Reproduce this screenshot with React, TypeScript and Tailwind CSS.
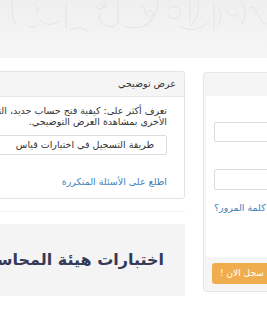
import React from "react";

function HeaderPattern() {
  return (
    <svg className="absolute inset-0" width="267" height="58" viewBox="0 0 267 58" fill="none">
      <g stroke="#e0e0e0" strokeWidth="0.8" fill="none" strokeLinecap="round">
        <path d="M12 2 C14 10 10 18 16 24" />
        <path d="M34 4 c4 2 6 6 2 9" />
        <path d="M40 20 c6 6 14 6 20 0" />
        <path d="M66 4 v24" />
        <path d="M70 30 c8 -4 14 -2 18 2" />
        <path d="M96 6 c2 4 6 4 8 0" />
        <path d="M100 14 c-2 6 2 12 8 12" />
        <path d="M118 2 v18 c0 6 -6 8 -10 6" />
        <path d="M124 26 c10 4 22 2 28 -6" />
        <path d="M140 6 c4 0 6 4 4 8" />
        <path d="M158 2 c0 8 -4 18 -14 24" />
        <path d="M170 8 c6 -4 12 0 10 6 c-2 6 -10 6 -12 0" />
        <path d="M180 26 c8 6 24 4 30 -6" />
        <path d="M190 2 v20" />
        <path d="M198 2 c2 10 -2 20 -8 24" />
        <path d="M214 4 v26" />
        <path d="M218 6 c4 6 4 14 0 20" />
        <path d="M226 10 c2 6 8 8 12 4" />
        <path d="M242 2 c4 6 4 14 0 22" />
        <path d="M250 8 c4 -2 8 2 6 6" />
        <path d="M258 14 c2 6 6 10 8 10" />
        <path d="M146 14 l4 -4 l4 4 l-4 4 z" />
        <path d="M104 2 l3 3 l-3 3 l-3 -3 z" />
        <path d="M28 26 c4 2 8 2 10 -2" />
      </g>
    </svg>
  );
}

export default function App() {
  const font = { fontFamily: '"DejaVu Sans", sans-serif' };
  return (
    <div
      className="relative w-[267px] h-[322px] overflow-hidden bg-white text-[#333]"
      style={font}
    >
      {/* Top band */}
      <div className="relative h-[58px] bg-gradient-to-b from-[#efefef] to-[#f6f6f6] border-b border-[#f0f0f0]">
        <HeaderPattern />
      </div>

      {/* Content row (RTL, extends beyond viewport) */}
      <div dir="rtl" className="flex items-start gap-[18px] mt-[13px] mr-[-136px]">
        {/* Right panel (login) */}
        <div className="w-[200px] shrink-0 mt-[1px] border border-[#e6e6e6] rounded-[3px] bg-[#f5f5f5]">
          <div className="h-[23px]" />
          <div className="mx-[2px] bg-white h-[161px] pt-[26px] pl-[8px] pr-[10px]">
            <div className="h-[20px] border border-[#dcdcdc] rounded-[2px] bg-white" />
            <div className="h-[21px] mt-[27px] border border-[#dcdcdc] rounded-[2px] bg-white" />
            <div className="flex justify-end mt-[11px]">
              <a className="text-[9.5px] leading-[14px] text-[#3f7fb8] whitespace-nowrap">
                هل نسيت كلمة المرور؟
              </a>
            </div>
          </div>
          <div className="h-[34px] pt-[6px] pl-[8px] flex justify-end">
            <button className="h-[21px] pl-[8px] pr-[10px] rounded-[3px] bg-[#f0ad4e] text-white text-[9px] whitespace-nowrap">
              سجل الان !
            </button>
          </div>
        </div>

        {/* Left column */}
        <div className="w-[420px] shrink-0">
          <div className="border border-[#e4e4e4] rounded-[3px] bg-white">
            <div className="h-[25px] bg-[#f5f5f5] border-b border-[#e8e8e8] rounded-t-[3px] pr-[8px] flex items-center text-[9.5px]">
              عرض توضيحي
            </div>
            <div className="pr-[17px] pt-[8px] pb-[9px]">
              <p className="text-[9.5px] leading-[11px] whitespace-nowrap">
                تعرف أكثر على: كيفية فتح حساب جديد، التسجيل في الاختبارات، وغيرها من الخدمات
                <br />
                الأخرى بمشاهدة العرض التوضيحي.
              </p>
              <div className="mt-[8px] h-[20px] border border-[#dddddd] rounded-[2px] flex items-center pr-[12px] text-[9.5px]">
                طريقة التسجيل في اختبارات قياس
              </div>
              <div className="mt-[20px] text-[9.5px] leading-[14px] text-[#3f7fb8]">
                اطلع على الأسئلة المتكررة
              </div>
            </div>
          </div>
          <div className="h-[13px] border-b border-[#f2f2f2]" />
          <div className="mt-[12px] h-[72px] bg-[#f4f4f4] flex items-center pr-[21px]">
            <span className="text-[16px] font-bold text-[#363a57]">
              اختبارات هيئة المحاسبين القانونيين
            </span>
          </div>
        </div>
      </div>
    </div>
  );
}
